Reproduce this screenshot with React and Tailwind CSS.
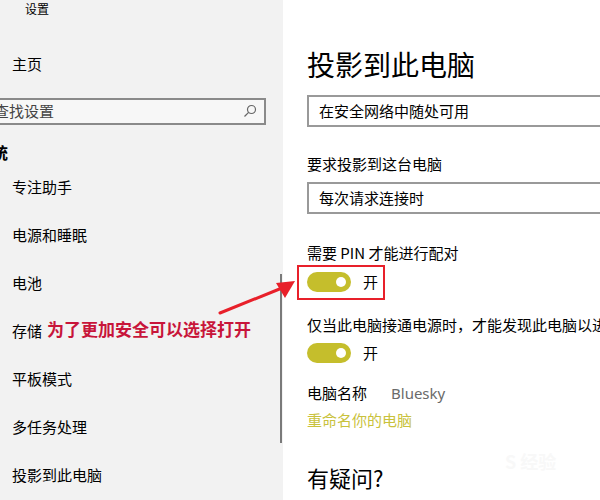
import React from "react";

const F = { fontFamily: '"Noto Sans CJK SC", "Noto Sans", sans-serif' };

function Toggle() {
  return (
    <div className="flex items-center">
      <div className="w-[44px] h-[20px] rounded-full bg-[#c5be2c] flex items-center justify-end pr-[5px]">
        <div className="w-[10px] h-[10px] rounded-full bg-white" />
      </div>
      <span className="ml-[12px] text-[15px] text-black">开</span>
    </div>
  );
}

export default function App() {
  const items = ["专注助手", "电源和睡眠", "电池", "存储", "平板模式", "多任务处理", "投影到此电脑"];
  return (
    <div className="w-[600px] h-[500px] flex relative overflow-hidden bg-white" style={F}>
      {/* Left pane */}
      <div className="w-[283px] h-full bg-[#f2f2f2] flex flex-col overflow-hidden relative shrink-0">
        <div className="h-[20px] flex items-center pl-[25px] text-[12px] text-black">设置</div>
        <div className="h-[92px] flex items-center pl-[12px] pt-[3px] text-[15px] text-black">
          <span className="mt-[10px]">主页</span>
        </div>
        <div className="h-[31px] w-[276px] ml-[-10px] border-2 border-[#8a8a8a] bg-[#f7f7f7] flex items-center justify-between pl-[2px] pr-[7px]">
          <span className="text-[15px] text-[#444]">查找设置</span>
          <svg width="14" height="14" viewBox="0 0 14 14" fill="none" stroke="#666" strokeWidth="1.2">
            <circle cx="8.5" cy="5.5" r="4" />
            <line x1="5.6" y1="8.4" x2="1.5" y2="12.5" />
          </svg>
        </div>
        <div className="h-[42px] flex items-center pt-[15px] ml-[-24px] text-[16px] font-bold text-black">系统</div>
        {items.map((t) => (
          <div key={t} className="h-[48px] shrink-0 flex items-center pl-[12px] text-[15px] text-black">
            <span className="mt-[-2px]">{t}</span>
          </div>
        ))}
        <div className="absolute left-[280px] top-[274px] w-[2px] h-[169px] bg-[#7a7a7a]" />
      </div>

      {/* Right pane */}
      <div className="flex-1 flex flex-col pl-[24px] text-black">
        <div className="h-[94px] flex items-center pt-[34px] text-[28px] leading-none">投影到此电脑</div>
        <div className="h-[32px] w-[320px] border-2 border-[#999] flex items-center pl-[10px] text-[15px] mt-[1px]">
          在安全网络中随处可用
        </div>
        <div className="h-[54px] flex items-center pt-[20px] text-[15px]">要求投影到这台电脑</div>
        <div className="h-[32px] w-[320px] border-2 border-[#999] flex items-center pl-[10px] text-[15px] mt-[1px]">
          每次请求连接时
        </div>
        <div className="h-[54px] flex items-center pt-[25px] text-[15px] whitespace-nowrap">需要 PIN 才能进行配对</div>
        <div className="h-[26px] flex items-center mt-[1px]">
          <Toggle />
        </div>
        <div className="h-[47px] flex items-center pt-[13px] text-[15px] whitespace-nowrap">
          仅当此电脑接通电源时，才能发现此电脑以进行投影
        </div>
        <div className="h-[20px] flex items-center mt-[1px]">
          <Toggle />
        </div>
        <div className="h-[43px] flex items-end pb-[2px] text-[15px] whitespace-nowrap">
          <span>电脑名称</span>
          <span className="ml-[24px] text-[#6a6a6a]" style={{ fontFamily: '"Segoe UI", "Noto Sans", "Noto Sans CJK SC", sans-serif' }}>Bluesky</span>
        </div>
        <div className="h-[26px] flex items-center pt-[2px] text-[15px] text-[#c9c23c]">重命名你的电脑</div>
        <div className="h-[60px] flex items-end pb-[4px] text-[22px] leading-none">有疑问?</div>
      </div>

      {/* Annotations */}
      <div className="absolute left-[47px] top-[318px] text-[17px] font-bold text-[#c8153a] whitespace-nowrap leading-[22px]">
        为了更加安全可以选择打开
      </div>
      <div className="absolute left-[297px] top-[265px] w-[88px] h-[35px] border-2 border-[#e8202a]" />
      <svg className="absolute left-0 top-0" width="600" height="500" viewBox="0 0 600 500">
        <line x1="220" y1="313" x2="282" y2="288" stroke="#e8202a" strokeWidth="3" strokeLinecap="round" />
        <polygon points="295,281 276,283 285,298" fill="#e8202a" />
      </svg>
      <div className="absolute left-[505px] top-[448px] text-[18px] font-bold text-[#f8f8f8] whitespace-nowrap">S 经验</div>
    </div>
  );
}
